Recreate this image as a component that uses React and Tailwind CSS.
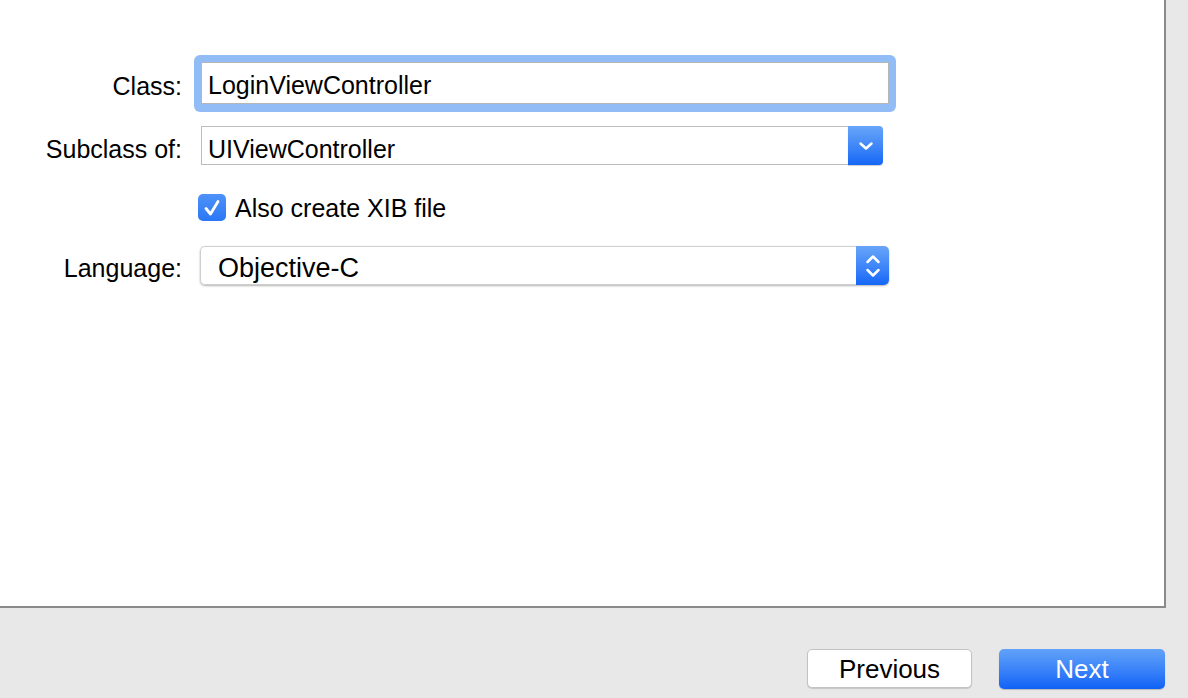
import React from "react";

function ChevronDown({ className }) {
  return (
    <svg className={className} viewBox="0 0 16 10" fill="none" stroke="white" strokeWidth="2.5" strokeLinecap="round" strokeLinejoin="round">
      <path d="M2.5 2.5 L8 7.5 L13.5 2.5" />
    </svg>
  );
}

function ChevronUpDown() {
  return (
    <svg width="18" height="30" viewBox="0 0 18 30" fill="none" stroke="white" strokeWidth="2.5" strokeLinecap="round" strokeLinejoin="round">
      <path d="M3.5 11 L9 5.5 L14.5 11" />
      <path d="M3.5 19 L9 24.5 L14.5 19" />
    </svg>
  );
}

export default function App() {
  return (
    <div
      className="w-[1188px] h-[698px] bg-[#e8e8e8] flex flex-col overflow-hidden text-black"
      style={{ fontFamily: '"Liberation Sans", Arial, sans-serif' }}
    >
      <div className="w-[1166px] h-[608px] bg-white border-r-2 border-b-2 border-[#8a8a8a] pt-[55px] flex flex-col">
        {/* Class row */}
        <div className="flex items-center h-[57px]">
          <div className="w-[182px] text-right text-[25px] leading-none pt-[5px]">Class:</div>
          <div className="ml-[12px] w-[702px] h-[57px] rounded-[6px] bg-[#92bcf6] p-[7px] pb-[8px]">
            <div className="h-[42px] bg-white border border-[#b5b5b5] flex items-center pl-[6px] text-[25px] leading-none pt-[4px]">
              LoginViewController
            </div>
          </div>
        </div>

        {/* Subclass row */}
        <div className="flex items-center mt-[14px] h-[39px]">
          <div className="w-[182px] text-right text-[25px] leading-none pt-[8px]">Subclass of:</div>
          <div className="ml-[19px] w-[682px] h-[39px] flex">
            <div className="flex-1 bg-white border border-r-0 border-[#bdbdbd] flex items-center pl-[6px] text-[25px] leading-none pt-[7px]">
              UIViewController
            </div>
            <div className="w-[35px] h-[39px] rounded-r-[4px] bg-gradient-to-b from-[#68a5f9] to-[#1366f6] flex items-center justify-center shadow-[0_1px_1px_rgba(0,0,0,0.2)]">
              <ChevronDown className="w-[16px] h-[10px]" />
            </div>
          </div>
        </div>

        {/* Checkbox row */}
        <div className="flex items-center mt-[29px] h-[27px]">
          <div className="w-[182px]" />
          <div className="ml-[16px] w-[28px] h-[27px] rounded-[5px] bg-gradient-to-b from-[#4e92f8] to-[#2a77f5] flex items-center justify-center">
            <svg width="20" height="20" viewBox="0 0 20 20" fill="none" stroke="white" strokeWidth="2.8" strokeLinecap="round" strokeLinejoin="round">
              <path d="M4 10.5 L8.5 16 L16 3.5" />
            </svg>
          </div>
          <div className="ml-[9px] text-[25px] leading-none pt-[2px]">Also create XIB file</div>
        </div>

        {/* Language row */}
        <div className="flex items-center mt-[25px] h-[39px]">
          <div className="w-[182px] text-right text-[25px] leading-none pt-[6px]">Language:</div>
          <div className="ml-[18px] w-[689px] h-[39px] flex rounded-[5px] shadow-[0_1px_2px_rgba(0,0,0,0.3)]">
            <div className="flex-1 bg-white border border-r-0 border-[#cfcfcf] rounded-l-[5px] flex items-center pl-[17px] text-[27px] leading-none pt-[5px]">
              Objective-C
            </div>
            <div className="w-[33px] h-[39px] rounded-r-[5px] bg-gradient-to-b from-[#68a5f9] to-[#1366f6] flex items-center justify-center">
              <ChevronUpDown />
            </div>
          </div>
        </div>
      </div>

      {/* Footer */}
      <div className="flex justify-end items-start pr-[23px] mt-[41px] gap-[27px]">
        <div className="w-[165px] h-[39px] bg-white border border-[#c3c3c3] rounded-[5px] shadow-[0_1px_1px_rgba(0,0,0,0.15)] flex items-center justify-center text-[26px] leading-none">
          Previous
        </div>
        <div className="w-[166px] h-[40px] rounded-[5px] bg-gradient-to-b from-[#62a2f9] to-[#0f62f6] shadow-[0_1px_1px_rgba(0,0,0,0.2)] flex items-center justify-center text-white text-[26px] leading-none">
          Next
        </div>
      </div>
    </div>
  );
}
